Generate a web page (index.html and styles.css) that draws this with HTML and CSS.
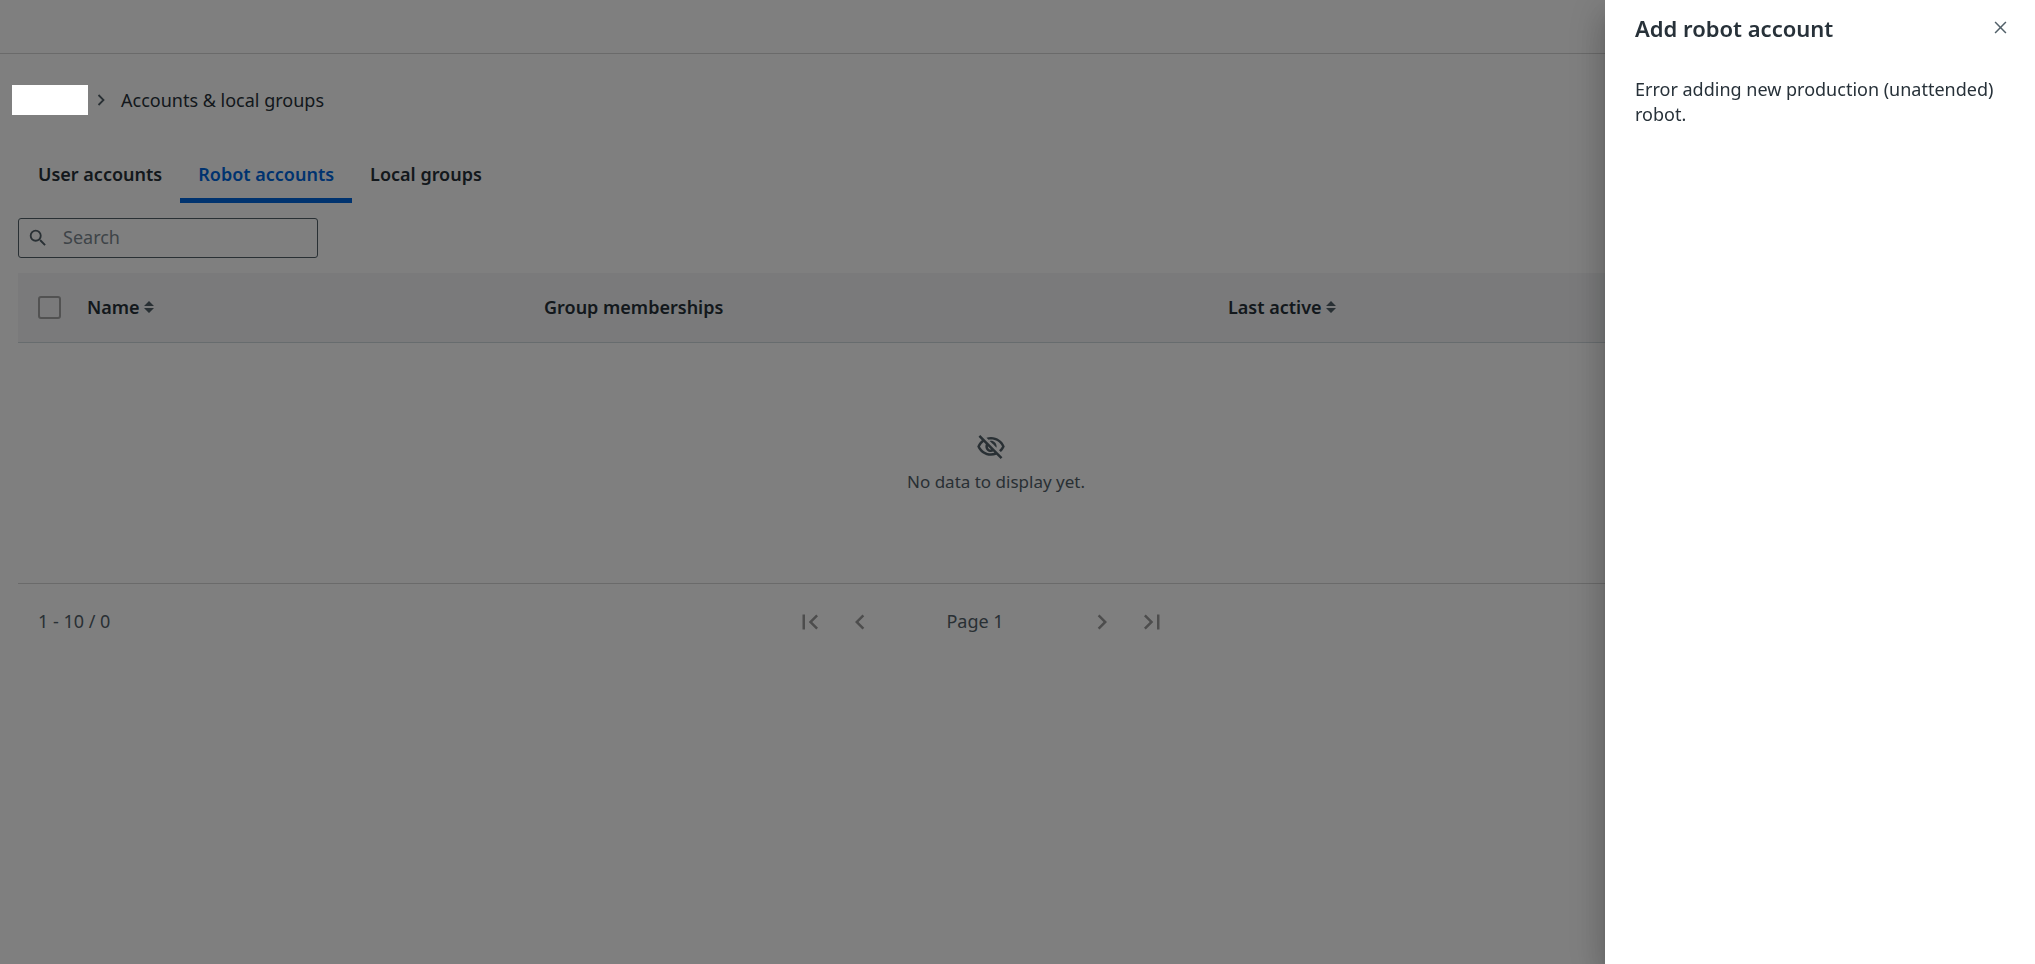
FILE: index.html
```html
<!DOCTYPE html>
<html lang="en">
<head>
<meta charset="utf-8">
<title>Accounts &amp; local groups</title>
<link rel="stylesheet" href="styles.css">
</head>
<body>
<header class="topbar"></header>
<main class="content">
  <nav class="breadcrumb" aria-label="Breadcrumb">
    <span class="crumb-blank"></span>
    <svg class="crumb-sep" viewBox="0 0 20 20" aria-hidden="true"><path d="M7.5 5l5 5-5 5" fill="none" stroke="currentColor" stroke-width="1.8"/></svg>
    <span>Accounts &amp; local groups</span>
  </nav>
  <div class="tabs" role="tablist">
    <button class="tab" role="tab" aria-selected="false">User accounts</button>
    <button class="tab tab-active" role="tab" aria-selected="true">Robot accounts</button>
    <button class="tab" role="tab" aria-selected="false">Local groups</button>
  </div>
  <label class="search">
    <svg viewBox="0 0 24 24" aria-hidden="true"><path fill="currentColor" d="M15.5 14h-.79l-.28-.27A6.47 6.47 0 0 0 16 9.5 6.5 6.5 0 1 0 9.5 16c1.61 0 3.09-.59 4.23-1.57l.27.28v.79l5 4.99L20.49 19l-4.99-5zm-6 0C7.01 14 5 11.99 5 9.5S7.01 5 9.5 5 14 7.01 14 9.5 11.99 14 9.5 14z"/></svg>
    <input class="search-input" type="text" placeholder="Search" aria-label="Search">
  </label>
  <table class="grid">
    <colgroup><col class="col-check"><col class="col-name"><col class="col-group"><col></colgroup>
    <thead>
      <tr>
        <th class="cell-check"><input class="check" type="checkbox" aria-label="Select all"></th>
        <th><button class="sort">Name<svg viewBox="0 0 10 12" aria-hidden="true"><path fill="currentColor" d="M5 0l5 5H0zM5 12l5-5H0z"/></svg></button></th>
        <th>Group memberships</th>
        <th><button class="sort">Last active<svg viewBox="0 0 10 12" aria-hidden="true"><path fill="currentColor" d="M5 0l5 5H0zM5 12l5-5H0z"/></svg></button></th>
      </tr>
    </thead>
    <tbody>
      <tr>
        <td colspan="4">
          <div class="empty">
            <svg viewBox="0 0 24 24" aria-hidden="true"><path fill="currentColor" d="M12 6c3.79 0 7.17 2.13 8.82 5.5-.59 1.22-1.42 2.27-2.41 3.12l1.41 1.41c1.39-1.23 2.49-2.77 3.18-4.53C21.27 7.11 17 4 12 4c-1.27 0-2.49.2-3.64.57l1.65 1.65C10.66 6.09 11.32 6 12 6zm-1.07 1.14L13 9.21c.57.25 1.03.71 1.28 1.28l2.07 2.07c.08-.34.14-.7.14-1.07C16.5 9.01 14.48 7 12 7c-.37 0-.72.05-1.07.14zM2.01 3.87l2.68 2.68C3.06 7.83 1.77 9.53 1 11.5 2.73 15.89 7 19 12 19c1.52 0 2.98-.29 4.32-.82l3.42 3.42 1.41-1.41L3.42 2.45 2.01 3.87zm7.5 7.5l2.61 2.61c-.04.01-.08.02-.12.02-1.38 0-2.5-1.12-2.5-2.5 0-.05.01-.08.01-.13zm-3.4-3.4l1.75 1.75c-.23.55-.36 1.15-.36 1.78 0 2.48 2.02 4.5 4.5 4.5.63 0 1.23-.13 1.77-.36l.98.98c-.88.24-1.8.38-2.75.38-3.79 0-7.17-2.13-8.82-5.5.7-1.43 1.72-2.61 2.93-3.53z"/></svg>
            <span>No data to display yet.</span>
          </div>
        </td>
      </tr>
    </tbody>
  </table>
  <nav class="pager" aria-label="Pagination">
    <span class="range">1 - 10 / 0</span>
    <div class="pages">
      <button class="page-btn" aria-label="First page" disabled><svg viewBox="0 0 24 24"><path fill="currentColor" d="M18.41 16.59L13.82 12l4.59-4.59L17 6l-6 6 6 6zM6 6h2v12H6z"/></svg></button>
      <button class="page-btn" aria-label="Previous page" disabled><svg viewBox="0 0 24 24"><path fill="currentColor" d="M15.41 7.41L14 6l-6 6 6 6 1.41-1.41L10.83 12z"/></svg></button>
      <span class="page-label">Page 1</span>
      <button class="page-btn" aria-label="Next page" disabled><svg viewBox="0 0 24 24"><path fill="currentColor" d="M10 6L8.59 7.41 13.17 12l-4.58 4.59L10 18l6-6z"/></svg></button>
      <button class="page-btn" aria-label="Last page" disabled><svg viewBox="0 0 24 24"><path fill="currentColor" d="M5.59 7.41L10.18 12l-4.59 4.59L7 18l6-6-6-6zM16 6h2v12h-2z"/></svg></button>
    </div>
  </nav>
</main>
<div class="backdrop"></div>
<aside class="drawer" role="dialog" aria-labelledby="drawer-title">
  <div class="drawer-head">
    <h2 id="drawer-title">Add robot account</h2>
    <button class="close" aria-label="Close"><svg viewBox="0 0 12 12"><path d="M1 1l10 10M11 1L1 11" fill="none" stroke="currentColor" stroke-width="1.4"/></svg></button>
  </div>
  <p class="message">Error adding new production (unattended) robot.</p>
</aside>
</body>
</html>
```
FILE: styles.css
```css
* { box-sizing: border-box; }
body {
  margin: 0;
  background: #fff;
  color: #273139;
  font-family: "Noto Sans", "Open Sans", sans-serif;
  font-size: 18px;
  line-height: 25px;
}
button, input { font: inherit; color: inherit; }
button { border: 0; padding: 0; background: none; }
svg { display: block; flex: none; }

.topbar { height: 54px; border-bottom: 1px solid #d4d4d4; }
.content { padding: 31px 71px 0 18px; }

.breadcrumb { display: flex; align-items: center; height: 30px; margin-left: -6px; }
.crumb-blank { position: relative; z-index: 3; width: 76px; height: 30px; background: #fff; }
.crumb-sep { width: 20px; height: 20px; margin: 0 10px 0 3px; color: #526069; }

.tabs { display: flex; height: 60px; margin-top: 28px; padding-left: 2px; }
.tab {
  padding: 8px 18px 0;
  border-bottom: 5px solid transparent;
  font-weight: 600;
}
.tab-active { color: #0067df; border-color: #0067df; }

.search {
  display: flex;
  align-items: center;
  gap: 12px;
  width: 300px;
  height: 40px;
  margin-top: 15px;
  padding: 0 8px;
  border: 1px solid #526069;
  border-radius: 3px;
  color: #526069;
}
.search svg { width: 22px; height: 22px; }
.search-input { flex: 1; min-width: 0; border: 0; padding: 0 2px 2px; outline: 0; background: none; }
.search-input::placeholder { color: #7d8890; opacity: 1; }

.grid { width: 100%; margin-top: 15px; border-collapse: collapse; table-layout: fixed; }
.col-check { width: 69px; }
.col-name { width: 457px; }
.col-group { width: 684px; }
.grid thead tr { height: 69px; background: #f4f5f7; border-bottom: 1px solid #cfd8dd; }
.grid th { padding: 0; text-align: left; font-weight: 600; }
.grid .cell-check { padding-left: 20px; }
.check {
  display: block;
  appearance: none;
  width: 23px;
  height: 23px;
  margin: 0;
  border: 2px solid #a4a4a4;
  border-radius: 3px;
}
.sort { display: flex; align-items: center; gap: 4px; }
.sort svg { width: 10px; height: 12px; color: #526069; }
.grid td { padding: 0; border-bottom: 1px solid #d4d4d4; }
.empty {
  display: flex;
  flex-direction: column;
  align-items: center;
  gap: 7px;
  padding: 89px 0;
  color: #526069;
}
.empty svg { width: 30px; height: 30px; }
.empty span { padding-left: 10px; font-size: 17px; }

.pager {
  display: grid;
  grid-template-columns: 1fr auto 1fr;
  align-items: center;
  height: 76px;
  padding-right: 20px;
  color: #526069;
}
.range { padding-left: 20px; }
.pages { display: flex; align-items: center; }
.page-btn { display: flex; align-items: center; justify-content: center; width: 50px; height: 50px; color: #9a9a9a; }
.page-btn svg { width: 30px; height: 30px; }
.page-label { width: 192px; padding-right: 12px; text-align: center; }

.backdrop { position: fixed; inset: 0; z-index: 2; background: rgba(0, 0, 0, .5); }
.drawer {
  position: fixed;
  top: 0;
  right: 0;
  bottom: 0;
  z-index: 4;
  width: 430px;
  padding: 12px 20px 0 30px;
  background: #fff;
  box-shadow: 0 10px 12px -6px rgba(0, 0, 0, .2), 0 20px 30px 2px rgba(0, 0, 0, .14), 0 8px 38px 6px rgba(0, 0, 0, .12);
}
.drawer-head { display: flex; justify-content: space-between; align-items: flex-start; height: 65px; }
.drawer-head h2 { margin: 0; font-size: 22px; line-height: 32px; font-weight: 600; }
.close { display: flex; align-items: center; justify-content: center; width: 30px; height: 30px; color: #526069; }
.close svg { width: 13px; height: 13px; }
.message { margin: 0; }
```
